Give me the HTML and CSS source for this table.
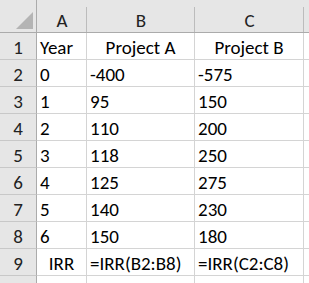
FILE: index.html
```html
<!DOCTYPE html>
<html>
<head>
<meta charset="utf-8">
<link rel="stylesheet" href="styles.css">
</head>
<body>
<div class="sheet">
  <div class="corner"><svg width="18" height="18" viewBox="0 0 18 18"><polygon points="18,0 18,17 1,17" fill="#b4b4b4"/></svg></div>
  <div class="colhead">A</div>
  <div class="colhead">B</div>
  <div class="colhead">C</div>
  <div class="colhead tail"></div>

  <div class="rowhead">1</div>
  <div class="cell left">Year</div>
  <div class="cell center">Project A</div>
  <div class="cell center">Project B</div>
  <div class="cell tail"></div>

  <div class="rowhead">2</div>
  <div class="cell left">0</div>
  <div class="cell left">-400</div>
  <div class="cell left">-575</div>
  <div class="cell tail"></div>

  <div class="rowhead">3</div>
  <div class="cell left">1</div>
  <div class="cell left">95</div>
  <div class="cell left">150</div>
  <div class="cell tail"></div>

  <div class="rowhead">4</div>
  <div class="cell left">2</div>
  <div class="cell left">110</div>
  <div class="cell left">200</div>
  <div class="cell tail"></div>

  <div class="rowhead">5</div>
  <div class="cell left">3</div>
  <div class="cell left">118</div>
  <div class="cell left">250</div>
  <div class="cell tail"></div>

  <div class="rowhead">6</div>
  <div class="cell left">4</div>
  <div class="cell left">125</div>
  <div class="cell left">275</div>
  <div class="cell tail"></div>

  <div class="rowhead">7</div>
  <div class="cell left">5</div>
  <div class="cell left">140</div>
  <div class="cell left">230</div>
  <div class="cell tail"></div>

  <div class="rowhead">8</div>
  <div class="cell left">6</div>
  <div class="cell left">150</div>
  <div class="cell left">180</div>
  <div class="cell tail"></div>

  <div class="rowhead">9</div>
  <div class="cell center">IRR</div>
  <div class="cell left">=IRR(B2:B8)</div>
  <div class="cell left">=IRR(C2:C8)</div>
  <div class="cell tail"></div>

  <div class="rowhead last"></div>
  <div class="cell last"></div>
  <div class="cell last"></div>
  <div class="cell last"></div>
  <div class="cell last tail"></div>
</div>
</body>
</html>
```
FILE: styles.css
```css
html, body {
  margin: 0;
  padding: 0;
  background: #ffffff;
}
body {
  width: 309px;
  height: 283px;
  overflow: hidden;
}
.sheet {
  display: grid;
  grid-template-columns: 37px 50px 108px 109px 1fr;
  grid-template-rows: 33px repeat(9, 27px) 7px;
  width: 309px;
  height: 283px;
  font-family: Carlito, Lato, "Liberation Sans", sans-serif;
  font-size: 19px;
  color: #000;
}
.sheet > div {
  box-sizing: border-box;
  display: flex;
  align-items: center;
  white-space: nowrap;
  overflow: hidden;
}
.corner {
  background: #e6e6e6;
  border-right: 1px solid #ababab;
  border-bottom: 1px solid #ababab;
  align-items: flex-start !important;
  justify-content: flex-end;
  padding: 12px 3px 0 0;
}
.corner svg {
  display: block;
}
.colhead {
  background: #e6e6e6 linear-gradient(#bcbcbc, #bcbcbc) right bottom / 1px 25px no-repeat;
  border-bottom: 1px solid #ababab;
  justify-content: center;
  padding-top: 9px;
  color: #222;
}
.colhead.tail {
  background: #e6e6e6;
}
.rowhead {
  background: #e6e6e6;
  border-right: 1px solid #ababab;
  border-bottom: 1px solid #c8c8c8;
  justify-content: center;
  padding-top: 2px;
  color: #222;
}
.cell {
  border-right: 1px solid #d4d4d4;
  border-bottom: 1px solid #d4d4d4;
  padding-top: 2px;
}
.cell.tail {
  border-right: none;
}
.last {
  border-bottom: none !important;
  padding: 0 !important;
}
.left {
  justify-content: flex-start;
  padding-left: 3px;
}
.center {
  justify-content: center;
}
```
